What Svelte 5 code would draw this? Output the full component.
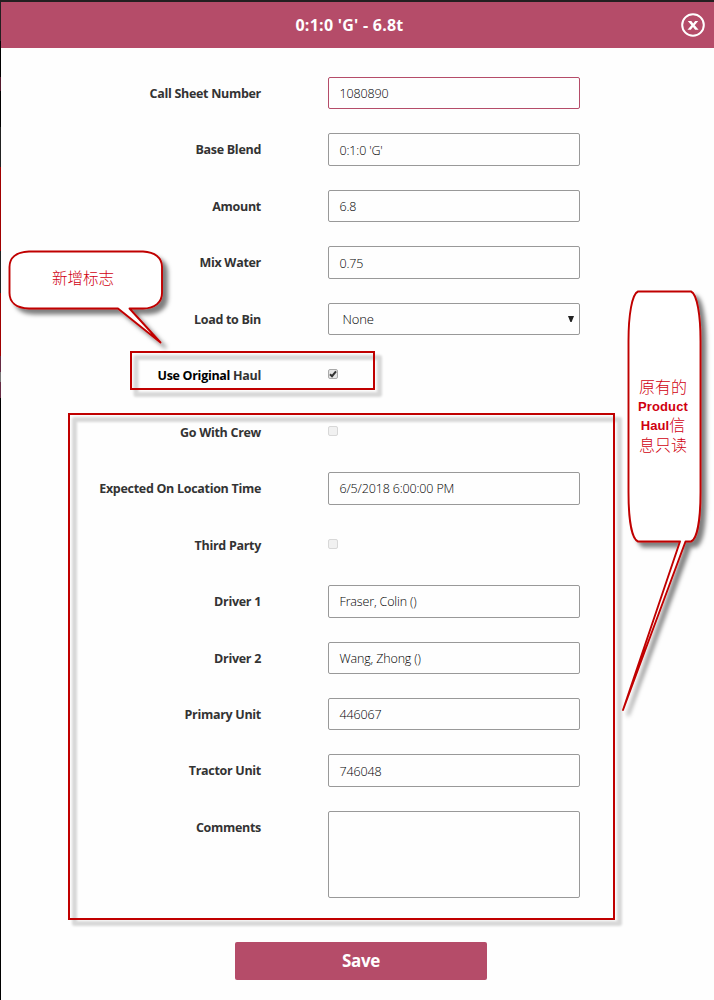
<script>
  const fields = [
    { label: 'Call Sheet Number', type: 'text', value: '1080890', active: true },
    { label: 'Base Blend', type: 'text', value: "0:1:0 'G'" },
    { label: 'Amount', type: 'text', value: '6.8' },
    { label: 'Mix Water', type: 'text', value: '0.75' },
    { label: 'Load to Bin', type: 'select', value: 'None' },
    { label: 'Use Original Haul', type: 'check', checked: true },
    { label: 'Go With Crew', type: 'check', checked: false },
    { label: 'Expected On Location Time', type: 'text', value: '6/5/2018 6:00:00 PM' },
    { label: 'Third Party', type: 'check', checked: false },
    { label: 'Driver 1', type: 'text', value: 'Fraser, Colin ()' },
    { label: 'Driver 2', type: 'text', value: 'Wang, Zhong ()' },
    { label: 'Primary Unit', type: 'text', value: '446067' },
    { label: 'Tractor Unit', type: 'text', value: '746048' },
    { label: 'Comments', type: 'area', value: '' }
  ];
</script>

<div class="page">
  <section class="dialog">
    <header>
      <h1>0:1:0 'G' - 6.8t</h1>
      <button class="close" aria-label="Close">
        <svg width="26" height="26" viewBox="0 0 26 26">
          <circle cx="13" cy="13" r="10.8" fill="none" stroke="#fff" stroke-width="2" />
          <path d="M7.800 9h3.500l1.900 2.400L15.200 9h3l-3.500 4.200 3.900 4.600h-3.500l-2.100-2.800-2.200 2.800H7.500l3.900-4.600z" fill="#fff" />
        </svg>
      </button>
    </header>
    <form>
      {#each fields as f}
        <div class="row" class:tall={f.type === 'area'}>
          <span class="label">
            {#if f.label === 'Use Original Haul'}<b>Use Original</b> Haul{:else}{f.label}{/if}
          </span>
          {#if f.type === 'check'}
            <span class="check" class:on={f.checked}>
              {#if f.checked}
                <svg width="8" height="8" viewBox="0 0 8 8"><path d="M1 4.200 3 6.200 7 1.300" fill="none" stroke="#333" stroke-width="2" /></svg>
              {/if}
            </span>
          {:else}
            <span class="field {f.type}" class:active={f.active}>
              <span>{f.value}</span>
              {#if f.type === 'select'}
                <svg class="arrow" width="6" height="6" viewBox="0 0 6 6"><path d="M0 0h6L3.600 6H2.400z" fill="#222" /></svg>
              {/if}
            </span>
          {/if}
        </div>
      {/each}
      <button class="save" type="button">Save</button>
    </form>
  </section>

  <svg class="marks" width="714" height="1000" viewBox="0 0 714 1000">
    <defs>
      <filter id="soft" x="-20%" y="-20%" width="150%" height="150%"><feGaussianBlur stdDeviation="1.1" /></filter>
      <filter id="drop" x="-20%" y="-20%" width="150%" height="150%"><feDropShadow dx="5" dy="5" stdDeviation="2" flood-color="#000" flood-opacity=".5" /></filter>
    </defs>
    <g fill="none">
      <g stroke="#000" stroke-opacity=".15" stroke-width="5" stroke-linejoin="round" filter="url(#soft)">
        <path d="M136 357.500H379.500V394.500H136z" />
        <path d="M74.500 419.500H619.500V923.500H74.500z" />
      </g>
      <g stroke="#c00000" stroke-width="2">
        <path d="M131 352H374V389H131z" />
        <path d="M69 414H614V919H69z" />
      </g>
    </g>
    <g fill="#fff" stroke="#c00000" stroke-width="1.900" stroke-linejoin="round" filter="url(#drop)">
      <path d="M29 251.500H143C155 252 162 258 162 267V293C162 302 155 308.500 143 308.500H129.500L160.500 342.500L118 308.500H29C16 308 9.500 302 9.500 293V267C9.500 258 16 252 29 251.500z" />
      <path d="M638 291.500H691C697 294 700.500 315 700.500 341V492C700.500 520 697 539 691 541.500H685.500L623 710L680 541.500H638C632 539 628.500 520 628.500 492V341C628.500 315 632 294 638 291.500z" />
    </g>
  </svg>
  <div class="note first">新增标志</div>
  <div class="note second">原有的<br /><b>Product</b><br /><b>Haul</b>信<br />息只读</div>
</div>

<style>
  .page {
    position: relative;
    box-sizing: border-box;
    width: 714px;
    height: 1000px;
    padding: 2px 0 0 1px;
    overflow: hidden;
    background: linear-gradient(#231f20 0 41px, #000 41px 77px, #54192d 77px 91px, #000 91px 127px, #222 127px 167px, #a00000 167px 251px, #222 251px 293px, #a00000 293px 356px, #652a43 356px 372px, #777 372px 382px, #652a43 382px 398px, #000 398px);
    color: #333;
    font-family: 'Open Sans', sans-serif;
  }
  .dialog { height: 998px; background: #fefefe; }
  header {
    display: grid;
    grid-template-columns: 40px 1fr 40px;
    align-items: center;
    box-sizing: border-box;
    height: 46px;
    background: #b54c69;
    color: #fff;
  }
  h1 {
    grid-column: 2;
    margin: 0 0 0 -16px;
    text-align: center;
    font-size: 16px;
    letter-spacing: 0.250px;
    line-height: 20px;
    font-weight: 700;
  }
  button { padding: 0; border: 0; font-family: inherit; }
  .close { display: flex; width: 26px; height: 26px; background: none; margin-left: 6px; }
  form { padding-top: 29px; }
  .row {
    display: grid;
    grid-template-columns: 260px 252px;
    column-gap: 67px;
    height: 56.460px;
    align-items: start;
  }
  .row.tall { height: 131px; }
  .label {
    padding-top: 8px;
    text-align: right;
    font-size: 12.500px;
    letter-spacing: -0.300px;
    line-height: 18px;
    font-weight: 700;
    white-space: nowrap;
  }
  .label b { color: #000; font-weight: 700; }
  .field {
    display: flex;
    align-items: center;
    justify-content: space-between;
    box-sizing: border-box;
    height: 32.460px;
    padding: 1px 5px 0 10.500px;
    border: 1px solid #999;
    border-radius: 2px;
    color: #000;
    font-size: 12.500px;
    letter-spacing: -0.150px;
    font-weight: 300;
    white-space: nowrap;
  }
  .active { border-color: #b54c69; }
  .select { padding: 0 5px 0 13.500px; font-size: 13px; letter-spacing: -0.100px; }
  .area { height: 87px; }
  .check {
    display: flex;
    align-items: center;
    justify-content: center;
    box-sizing: border-box;
    width: 10px;
    height: 10px;
    margin-top: 10px;
    border: 1px solid #d8d8d8;
    border-radius: 2px;
    background: #f1f1f1;
  }
  .check.on { border-color: #aaa; background: #e5e5e5; }
  .save {
    display: block;
    width: 252px;
    height: 38px;
    margin-left: 234px;
    border-radius: 2px;
    background: #b54c69;
    color: #fff;
    font-size: 17px;
    letter-spacing: -0.300px;
    line-height: 38px;
    font-weight: 700;
  }
  .marks { position: absolute; left: 0; top: 0; }
  .note {
    position: absolute;
    color: #d00010;
    font-family: 'Liberation Sans', 'Noto Sans CJK SC', sans-serif;
    font-weight: 300;
    text-align: center;
    white-space: nowrap;
  }
  .first { left: 52px; top: 269px; font-size: 15.500px; line-height: 20px; }
  .second { left: 634px; top: 379px; width: 58px; font-size: 16px; line-height: 18.600px; }
  .second b { font-size: 13px; font-weight: 700; letter-spacing: 0.100px; position: relative; top: -1px; }
</style>
